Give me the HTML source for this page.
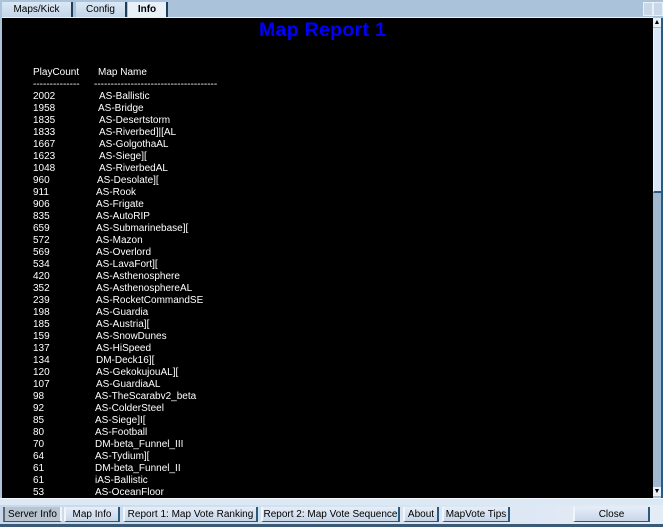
<!DOCTYPE html>
<html><head><style>
body{margin:0;width:663px;height:527px;background:#aac2da;position:relative;overflow:hidden;font-family:"Liberation Sans",sans-serif;}
.tab{position:absolute;top:2px;height:15px;font-size:10px;line-height:15px;text-align:center;color:#000;background:linear-gradient(#dbe8f5,#c3d5e8);border-right:2px solid #1e3e5a;}
#main{position:absolute;left:2px;top:17px;width:651px;height:480px;background:#000;border-top:1px solid #e8f0f8;}
.r{position:absolute;color:#fff;font-size:10px;line-height:12px;white-space:pre;}
#title{position:absolute;left:257px;top:1px;font-size:19.5px;font-weight:bold;color:#0000ff;letter-spacing:0.3px;}
.btn{position:absolute;top:507px;height:15px;font-size:10px;line-height:15px;text-align:center;color:#000;background:linear-gradient(#e6eef8,#c6d6e8);border-left:2px solid #f2f6fb;border-right:2px solid #2a5a80;border-bottom:1px solid #2a5a80;box-sizing:border-box;}
</style></head><body>
<div class="tab" style="left:2px;width:69px;">Maps/Kick</div>
<div class="tab" style="left:76px;width:49px;">Config</div>
<div class="tab" style="left:128px;width:38px;font-weight:bold;background:#e8f0f8;height:16px;">Info</div>
<div style="position:absolute;left:643px;top:2px;width:8px;height:12px;background:#c8d8e8;border:1px solid #e8f0f8"></div>
<div style="position:absolute;left:653px;top:2px;width:8px;height:12px;background:#c8d8e8;border:1px solid #e8f0f8"></div>
<div id="main">
<div id="title">Map Report 1</div>
</div>
<div style="position:absolute;left:653px;top:18px;width:8px;height:479px;background:#a0b8d0"></div>
<div style="position:absolute;left:653px;top:18px;width:8px;height:9px;background:#e8f0f8;font-size:7px;line-height:9px;text-align:center">▲</div>
<div style="position:absolute;left:653px;top:28px;width:7px;height:163px;background:#d8e8f8;border-left:1px solid #f0f6fc;border-bottom:2px solid #2a5a80"></div>
<div style="position:absolute;left:653px;top:487px;width:8px;height:9px;background:#e8f0f8;font-size:7px;line-height:9px;text-align:center">▼</div>
<div style="position:absolute;left:661px;top:18px;width:2px;height:480px;background:#2a5a80"></div>
<div style="position:absolute;left:0;top:498px;width:663px;height:6px;background:#dce8f4;border-top:1px solid #f4f8fc;border-bottom:1px solid #8aa8c4"></div>
<div style="position:absolute;left:0;top:505px;width:663px;height:19px;background:linear-gradient(90deg,#c8d8ea,#e4ecf6)"></div>
<div style="position:absolute;left:0;top:524px;width:663px;height:3px;background:#3a5a78"></div>
<div class="btn" style="left:3px;width:59px;background:#b8c4d0;border-left-color:#606a74;border-right-color:#f0f4f8">Server Info</div>
<div class="btn" style="left:64px;width:56px;">Map Info</div>
<div class="btn" style="left:123px;width:135px;">Report 1: Map Vote Ranking</div>
<div class="btn" style="left:261px;width:139px;">Report 2: Map Vote Sequence</div>
<div class="btn" style="left:403px;width:36px;">About</div>
<div class="btn" style="left:442px;width:68px;">MapVote Tips</div>
<div class="btn" style="left:573px;width:77px;">Close</div>
<div id="rows"></div>
<script>
var d=[["2002","AS-Ballistic",99],["1958","AS-Bridge",98],["1835","AS-Desertstorm",99],["1833","AS-Riverbed]|[AL",99],["1667","AS-GolgothaAL",99],["1623","AS-Siege][",99],["1048","AS-RiverbedAL",99],["960","AS-Desolate][",97],["911","AS-Rook",96],["906","AS-Frigate",96],["835","AS-AutoRIP",96],["659","AS-Submarinebase][",96],["572","AS-Mazon",96],["569","AS-Overlord",96],["534","AS-LavaFort][",96],["420","AS-Asthenosphere",96],["352","AS-AsthenosphereAL",96],["239","AS-RocketCommandSE",96],["198","AS-Guardia",96],["185","AS-Austria][",96],["159","AS-SnowDunes",96],["137","AS-HiSpeed",96],["134","DM-Deck16][",96],["120","AS-GekokujouAL][",96],["107","AS-GuardiaAL",96],["98","AS-TheScarabv2_beta",95],["92","AS-ColderSteel",95],["85","AS-Siege]I[",95],["80","AS-Football",95],["70","DM-beta_Funnel_III",95],["64","AS-Tydium][",95],["61","DM-beta_Funnel_II",95],["61","iAS-Ballistic",95],["53","AS-OceanFloor",95]];
var h='<div class="r" style="left:33px;top:67px">PlayCount</div><div class="r" style="left:98px;top:67px">Map Name</div>'+
'<div class="r" style="left:33px;top:79px">--------------</div><div class="r" style="left:94px;top:79px">-------------------------------------</div>';
d.forEach(function(x,i){var t=91+i*12;h+='<div class="r" style="left:33px;top:'+t+'px">'+x[0]+'</div><div class="r" style="left:'+x[2]+'px;top:'+t+'px">'+x[1]+'</div>';});
document.getElementById('rows').innerHTML=h;
</script>
</body></html>
